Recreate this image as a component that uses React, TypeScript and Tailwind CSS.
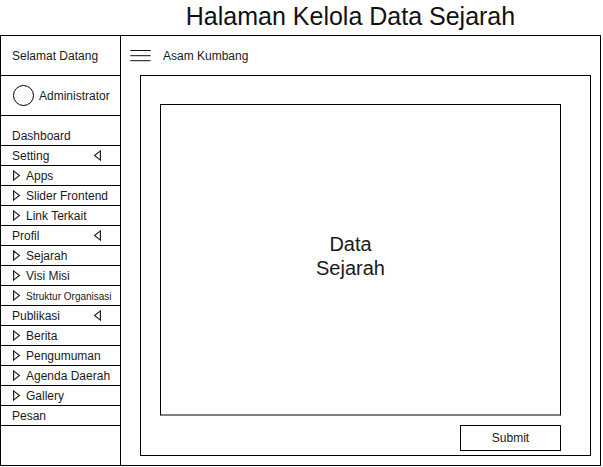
import React from "react";

type Item = { label: string; kind: "plain" | "group" | "child"; small?: boolean };

const items: Item[] = [
  { label: "Setting", kind: "group" },
  { label: "Apps", kind: "child" },
  { label: "Slider Frontend", kind: "child" },
  { label: "Link Terkait", kind: "child" },
  { label: "Profil", kind: "group" },
  { label: "Sejarah", kind: "child" },
  { label: "Visi Misi", kind: "child" },
  { label: "Struktur Organisasi", kind: "child", small: true },
  { label: "Publikasi", kind: "group" },
  { label: "Berita", kind: "child" },
  { label: "Pengumuman", kind: "child" },
  { label: "Agenda Daerah", kind: "child" },
  { label: "Gallery", kind: "child" },
  { label: "Pesan", kind: "plain" },
];

function RightArrow() {
  return (
    <svg width="10" height="12" viewBox="0 0 10 12" fill="none" stroke="#222" strokeWidth="1.2" aria-hidden="true">
      <path d="M1.6 0.9 L7.4 5.5 L1.6 10.1 Z" />
    </svg>
  );
}

function LeftArrow() {
  return (
    <svg width="10" height="12" viewBox="0 0 10 12" fill="none" stroke="#222" strokeWidth="1.2" aria-hidden="true">
      <path d="M8.4 0.9 L2.6 5.5 L8.4 10.1 Z" />
    </svg>
  );
}

function NavItem({ item }: { item: Item }) {
  const row = "flex h-5 w-full items-center border-b border-black pl-[11px] text-left";
  if (item.kind === "group") {
    return (
      <button type="button" className={row + " justify-between pr-[18px]"}>
        <span>{item.label}</span>
        <LeftArrow />
      </button>
    );
  }
  return (
    <a href="#" className={row}>
      {item.kind === "child" && (
        <span className="mr-1">
          <RightArrow />
        </span>
      )}
      <span className={item.small ? "pt-0.5 text-[10px] whitespace-nowrap" : "whitespace-nowrap"}>{item.label}</span>
    </a>
  );
}

export default function App() {
  return (
    <div className="flex min-h-screen flex-col bg-white pr-0.5 pb-px font-['Liberation_Sans',Arial,sans-serif] text-xs text-[#1a1a1a]">
      <h1 className="h-[35px] pt-px pl-[100px] text-center text-[25px] leading-[30px] text-[#111]">
        Halaman Kelola Data Sejarah
      </h1>
      <div className="flex flex-1 border border-black">
        <aside className="w-[120px] shrink-0 border-r border-black">
          <div className="flex h-10 items-center border-b border-black pl-[11px]">Selamat Datang</div>
          <div className="flex h-10 items-center gap-1 border-b border-black pl-3">
            <svg width="22" height="22" viewBox="0 0 22 22" fill="none" stroke="#000" aria-hidden="true">
              <circle cx="10.5" cy="10.5" r="10" />
            </svg>
            <span>Administrator</span>
          </div>
          <nav>
            <a href="#" className="flex h-[30px] items-end border-b border-black pb-px pl-[11px]">
              Dashboard
            </a>
            {items.map((item) => (
              <NavItem key={item.label} item={item} />
            ))}
          </nav>
        </aside>
        <main className="flex flex-1 flex-col pr-[9px] pb-[9px] pl-[19px]">
          <header className="-ml-2.5 flex h-[39px] items-center gap-3">
            <button type="button" aria-label="Menu">
              <svg className="block" width="21" height="12" viewBox="0 0 21 12" stroke="#111" aria-hidden="true">
                <path d="M.3 .5H20.7M.3 5.7H20.7M.3 10.7H20.7" />
              </svg>
            </button>
            <span>Asam Kumbang</span>
          </header>
          <section className="flex flex-1 flex-col border border-black pt-7 pr-[29px] pb-1 pl-[19px]">
            <div className="flex flex-1 items-center justify-center border border-b-2 border-black border-b-[#808080] pr-5 pb-2 text-center text-xl leading-6">
              <p>
                Data
                <br />
                Sejarah
              </p>
            </div>
            <button type="button" className="mt-[9px] h-[26px] w-[101px] self-end border border-black">
              Submit
            </button>
          </section>
        </main>
      </div>
    </div>
  );
}
